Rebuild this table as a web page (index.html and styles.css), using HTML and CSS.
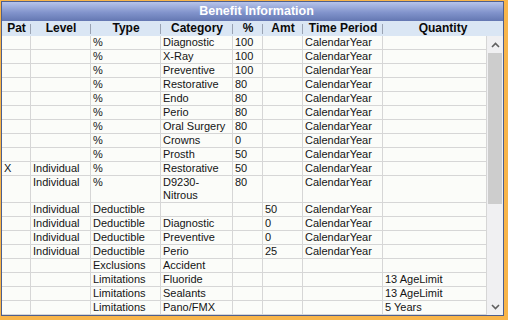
FILE: index.html
```html
<!DOCTYPE html>
<html>
<head>
<meta charset="utf-8">
<link rel="stylesheet" href="styles.css">
</head>
<body>
<div class="panel">
  <div class="title">Benefit Information</div>
  <div class="head row">
    <div class="hc">Pat</div>
    <div class="hc">Level</div>
    <div class="hc">Type</div>
    <div class="hc">Category</div>
    <div class="hc">%</div>
    <div class="hc">Amt</div>
    <div class="hc">Time Period</div>
    <div class="hc last">Quantity</div>
  </div>
  <div class="body">
    <div class="rows">
      <div class="row"><div></div><div></div><div>%</div><div>Diagnostic</div><div>100</div><div></div><div>CalendarYear</div><div></div></div>
      <div class="row"><div></div><div></div><div>%</div><div>X-Ray</div><div>100</div><div></div><div>CalendarYear</div><div></div></div>
      <div class="row"><div></div><div></div><div>%</div><div>Preventive</div><div>100</div><div></div><div>CalendarYear</div><div></div></div>
      <div class="row"><div></div><div></div><div>%</div><div>Restorative</div><div>80</div><div></div><div>CalendarYear</div><div></div></div>
      <div class="row"><div></div><div></div><div>%</div><div>Endo</div><div>80</div><div></div><div>CalendarYear</div><div></div></div>
      <div class="row"><div></div><div></div><div>%</div><div>Perio</div><div>80</div><div></div><div>CalendarYear</div><div></div></div>
      <div class="row"><div></div><div></div><div>%</div><div>Oral Surgery</div><div>80</div><div></div><div>CalendarYear</div><div></div></div>
      <div class="row"><div></div><div></div><div>%</div><div>Crowns</div><div>0</div><div></div><div>CalendarYear</div><div></div></div>
      <div class="row"><div></div><div></div><div>%</div><div>Prosth</div><div>50</div><div></div><div>CalendarYear</div><div></div></div>
      <div class="row"><div>X</div><div>Individual</div><div>%</div><div>Restorative</div><div>50</div><div></div><div>CalendarYear</div><div></div></div>
      <div class="row tall"><div></div><div>Individual</div><div>%</div><div>D9230-<br>Nitrous</div><div>80</div><div></div><div>CalendarYear</div><div></div></div>
      <div class="row"><div></div><div>Individual</div><div>Deductible</div><div></div><div></div><div>50</div><div>CalendarYear</div><div></div></div>
      <div class="row"><div></div><div>Individual</div><div>Deductible</div><div>Diagnostic</div><div></div><div>0</div><div>CalendarYear</div><div></div></div>
      <div class="row"><div></div><div>Individual</div><div>Deductible</div><div>Preventive</div><div></div><div>0</div><div>CalendarYear</div><div></div></div>
      <div class="row"><div></div><div>Individual</div><div>Deductible</div><div>Perio</div><div></div><div>25</div><div>CalendarYear</div><div></div></div>
      <div class="row"><div></div><div></div><div>Exclusions</div><div>Accident</div><div></div><div></div><div></div><div></div></div>
      <div class="row"><div></div><div></div><div>Limitations</div><div>Fluoride</div><div></div><div></div><div></div><div>13 AgeLimit</div></div>
      <div class="row"><div></div><div></div><div>Limitations</div><div>Sealants</div><div></div><div></div><div></div><div>13 AgeLimit</div></div>
      <div class="row"><div></div><div></div><div>Limitations</div><div>Pano/FMX</div><div></div><div></div><div></div><div>5 Years</div></div>
      <div class="row"><div></div><div></div><div></div><div></div><div></div><div></div><div></div><div></div></div>
    </div>
    <div class="scroll">
      <div class="arrow up"><svg width="9" height="6" viewBox="0 0 9 6"><path d="M1 5 L4.5 1.5 L8 5" fill="none" stroke="#606060" stroke-width="1.6"/></svg></div>
      <div class="track"><div class="thumb"></div></div>
      <div class="arrow down"><svg width="9" height="6" viewBox="0 0 9 6"><path d="M1 1 L4.5 4.5 L8 1" fill="none" stroke="#606060" stroke-width="1.6"/></svg></div>
    </div>
  </div>
</div>
</body>
</html>
```

FILE: styles.css
```css
html, body {
  margin: 0;
  padding: 0;
}
body {
  background: #f8b54a;
  width: 508px;
  height: 320px;
  overflow: hidden;
  font-family: "Liberation Sans", Arial, sans-serif;
}
.panel {
  margin: 1px 4px 0 1px;
  width: 503px;
  height: 315px;
  box-sizing: border-box;
  border: 1px solid #4e5f8e;
  background: #fbfcf9;
  display: flex;
  flex-direction: column;
  overflow: hidden;
}
.title {
  height: 19px;
  flex: none;
  background: linear-gradient(#b7c4ea, #8294cc 55%, #6477b2);
  color: #ffffff;
  font-weight: bold;
  font-size: 12.5px;
  line-height: 19px;
  text-align: center;
  padding-left: 8px;
}
.row {
  display: grid;
  grid-template-columns: 29px 60px 70px 72px 30px 40px 80px 104px;
  height: 14px;
  box-sizing: border-box;
  border-bottom: 1px solid #d6d6d6;
  font-size: 11px;
  line-height: 13px;
  color: #141414;
}
.row > div {
  border-right: 1px solid #d6d6d6;
  padding-left: 2px;
  white-space: nowrap;
  overflow: hidden;
}
.row.tall {
  height: 27px;
}
.head {
  flex: none;
  height: 15px;
  grid-template-columns: 29px 60px 70px 72px 30px 40px 80px 1fr;
  background: #dae6f4;
  border-bottom: 1px solid #dae6f4;
  font-size: 12px;
  font-weight: bold;
  line-height: 15px;
  color: #0a0a0a;
}
.head > .hc {
  border-right: none;
  padding-left: 0;
  text-align: center;
  position: relative;
}
.head > .hc::after {
  content: "";
  position: absolute;
  right: 0;
  top: 3px;
  height: 10px;
  width: 1px;
  background: #9aa3b3;
}
.head > .hc.last::after {
  display: none;
}
.body {
  flex: 1;
  display: flex;
  overflow: hidden;
}
.rows {
  flex: 1;
  overflow: hidden;
}
.scroll {
  width: 16px;
  flex: none;
  background: #f0f0f2;
  display: flex;
  flex-direction: column;
}
.arrow {
  height: 17px;
  display: flex;
  align-items: center;
  justify-content: center;
  flex: none;
}
.track {
  flex: 1;
  padding: 0 1px;
}
.thumb {
  height: 151px;
  background: #cdcdcd;
}
```
